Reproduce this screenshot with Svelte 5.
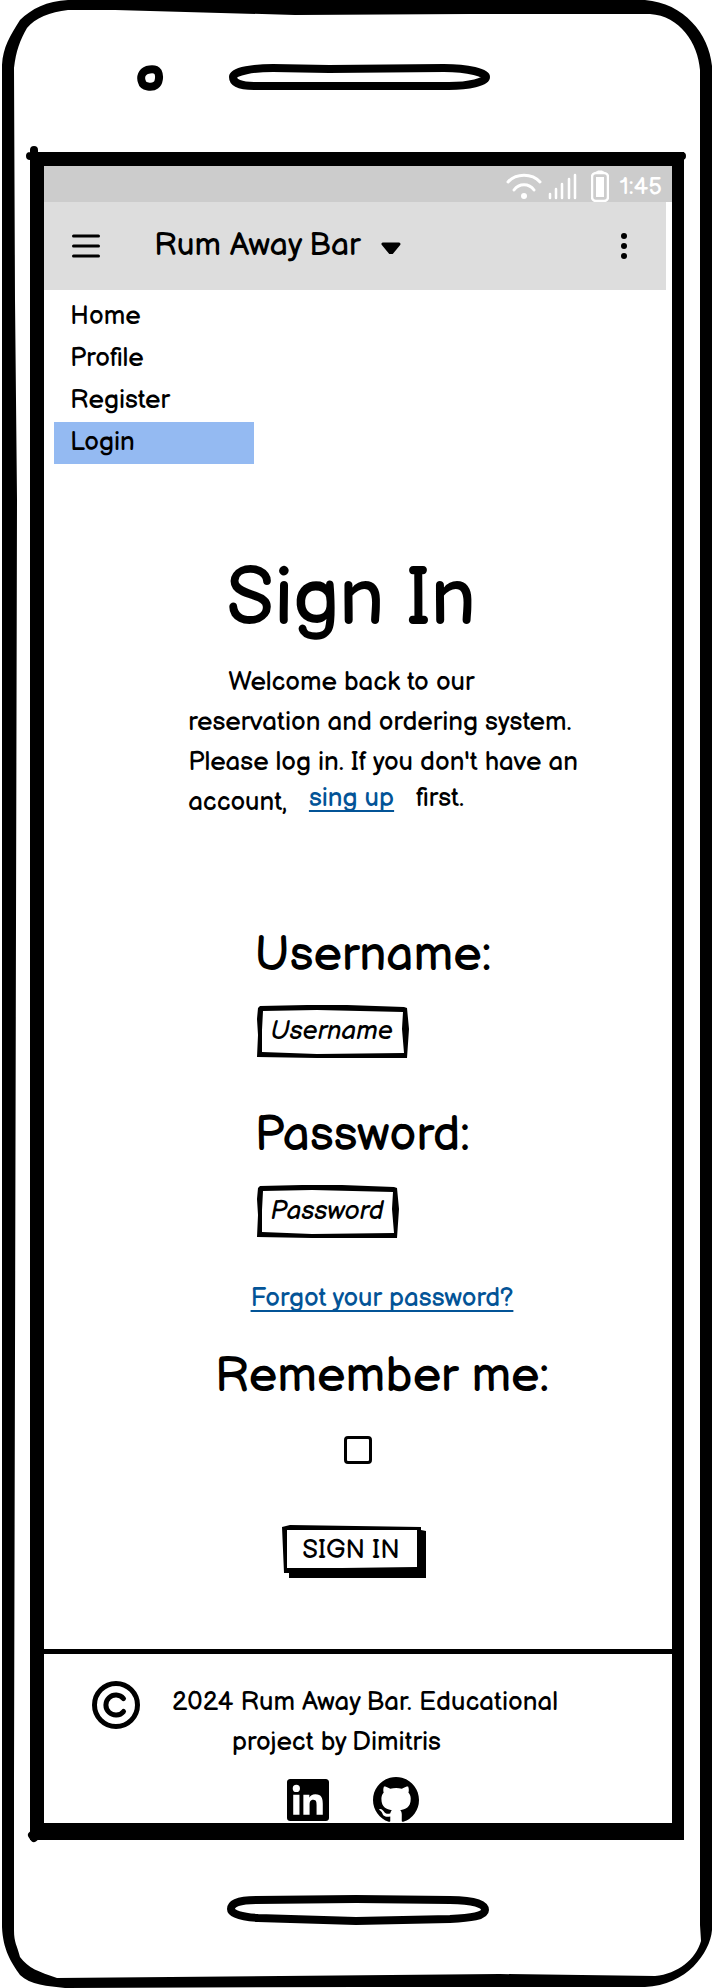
<script>
  const menu = ['Home', 'Profile', 'Register', 'Login'];
  const current = 'Login';
  let username = $state('');
  let password = $state('');
  let remember = $state(false);
</script>

<div class="phone">
  <svg class="frame" viewBox="0 0 712 1988" preserveAspectRatio="none" aria-hidden="true">
    <path
      fill-rule="evenodd"
      d="M68 0H645C684 3 709 34 712 66V1930C710 1953 687 1985 645 1987L357 1987L65 1988C48 1986 30 1985 20 1975C11 1962 3 1950 2 1927V65C3 47 10 36 20 20C31 9 47 1 68 0Z
         M68 10L115 10L295 15L470 14L650 14C680 16 698 43 700 70V1925L701 1941C696 1959 678 1974 655 1976L500 1974L57 1978C39 1972 28 1968 20 1957C17 1945 14 1943 14 1930V1780L17 500L15 300L14 68C16 51 20 40 27 28C35 18 50 12 68 10Z"
    />
    <path d="M34 165V150M34 156H30M680 156H682M32 1835L34 1838" fill="none" stroke="#000" stroke-width="8" stroke-linecap="round" />
  </svg>

  <div class="top">
    <svg width="28" height="28" viewBox="0 0 28 28" aria-hidden="true">
      <path d="M11 7C15 6 20 6 22 9C24 13 23 20 20 22C16 25 7 24 6 19C4 14 6 9 11 7Z" fill="none" stroke="#000" stroke-width="8" />
    </svg>
    <svg width="262" height="28" viewBox="0 0 262 28" aria-hidden="true">
      <path d="M4 14C4 8 26 5 44 5L100 6L215 5C240 5 257 10 257 14C257 19 240 23 220 23H25C12 23 4 20 4 14Z" fill="none" stroke="#000" stroke-width="8" />
    </svg>
  </div>

  <div class="screen">
    <div class="status">
      <svg width="36" height="28" viewBox="0 0 36 28" fill="none" stroke="#fff" stroke-width="3" stroke-linecap="round" aria-hidden="true">
        <path d="M2 10C10 1 26 1 34 10M8 18C13 11 23 11 28 18" />
        <circle cx="18" cy="24" r="3" fill="#fff" stroke="none" />
      </svg>
      <svg class="signal" width="29" height="28" viewBox="0 0 29 28" fill="none" stroke="#fff" stroke-width="2.500" stroke-linecap="round" aria-hidden="true">
        <path d="M2 22V26M8 17V26M14 12V26M21 7V26M27 3V26" />
      </svg>
      <svg class="battery" width="18" height="32" viewBox="0 0 18 32" aria-hidden="true">
        <path d="M4 3L7 1H11L14 3Z" fill="#fff" stroke="#fff" stroke-linejoin="round" />
        <rect x="1" y="3" width="16" height="28" rx="4" fill="none" stroke="#fff" stroke-width="2.500" />
        <rect x="5" y="7" width="8" height="20" fill="#fff" />
      </svg>
      <span class="time">1:45</span>
    </div>

    <header>
      <button class="icon" aria-label="Menu">
        <svg width="28" height="24" viewBox="0 0 28 24" stroke="#000" stroke-width="3" stroke-linecap="round">
          <path d="M1.500 2H26.500M1.500 12H26.500M1.500 22H26.500" />
        </svg>
      </button>
      <button class="title">
        Rum Away Bar
        <svg width="20" height="12" viewBox="0 0 20 12">
          <path d="M2 2H18L11 10.500H9Z" stroke="#000" stroke-width="3" stroke-linejoin="round" />
        </svg>
      </button>
      <button class="icon more" aria-label="More">
        <svg width="6" height="26" viewBox="0 0 6 26">
          <circle cx="3" cy="3" r="3" /><circle cx="3" cy="13" r="3" /><circle cx="3" cy="23" r="3" />
        </svg>
      </button>
    </header>

    <nav>
      {#each menu as item}
        <a href="#{item.toLowerCase()}" class:active={item === current}>{item}</a>
      {/each}
    </nav>

    <main>
      <h1>Sign In</h1>
      <p>
        Welcome back to our<br />
        reservation and ordering system.<br />
        Please log in. If you don't have an<br />
        account,<a class="link raised" href="#signup">sing up</a><span class="raised">first.</span>
      </p>

      <form onsubmit={(e) => e.preventDefault()}>
        <div class="fields">
          <label for="username">Username:</label>
          <div class="box">
            <svg viewBox="0 0 152 53" preserveAspectRatio="none" aria-hidden="true">
              <path fill-rule="evenodd" d="M3 1L50 0L90 0L147 2L150 3L152 24L150 53L100 53L60 53L0 52L1 30L0 14L1 3ZM6 6L60 5L146 7L145 24L147 48L60 49L5 47L5 25Z" />
            </svg>
            <input id="username" placeholder="Username" bind:value={username} />
          </div>
          <label for="password">Password:</label>
          <div class="box short">
            <svg viewBox="0 0 142 53" preserveAspectRatio="none" aria-hidden="true">
              <path fill-rule="evenodd" d="M3 1L45 0L85 0L137 2L140 3L142 24L140 53L95 53L55 53L0 52L1 30L0 14L1 3ZM6 6L55 5L136 7L135 24L137 48L55 49L5 47L5 25Z" />
            </svg>
            <input id="password" type="password" placeholder="Password" bind:value={password} />
          </div>
        </div>
        <a class="link forgot" href="#forgot">Forgot your password?</a>
        <label class="remember" for="remember">Remember me:</label>
        <input id="remember" type="checkbox" bind:checked={remember} />
        <button class="submit">
          <svg viewBox="0 0 144 53" preserveAspectRatio="none" aria-hidden="true">
            <path fill-rule="evenodd" d="M0 2L8 0L139 2V5L144 6V53H7V48H2L1 25ZM5 5L135 5V42L60 43L5 43Z" />
          </svg>
          <span>SIGN IN</span>
        </button>
      </form>
    </main>

    <footer>
      <div class="legal">
        <svg width="48" height="48" viewBox="0 0 48 48" fill="none" stroke="#000" aria-hidden="true">
          <circle cx="24" cy="24" r="21.500" stroke-width="5" />
          <path d="M31.500 17.500A10 10 0 1 0 31.500 30.500" stroke-width="5" stroke-linecap="round" />
        </svg>
        <small>2024 Rum Away Bar. Educational<span>project by Dimitris</span></small>
      </div>
      <div class="social">
        <a href="#linkedin" aria-label="LinkedIn">
          <svg width="42" height="42" viewBox="0 0 24 24">
            <path d="M20.447 20.452h-3.554v-5.569c0-1.328-.027-3.037-1.852-3.037-1.853 0-2.136 1.445-2.136 2.939v5.667H9.351V9h3.414v1.561h.046c.477-.9 1.637-1.850 3.370-1.850 3.601 0 4.267 2.370 4.267 5.455v6.286zM5.337 7.433a2.062 2.062 0 0 1-2.063-2.065 2.064 2.064 0 1 1 2.063 2.065zm1.782 13.019H3.555V9h3.564v11.452zM22.225 0H1.771C.792 0 0 .774 0 1.729v20.542C0 23.227.792 24 1.771 24h20.451C23.200 24 24 23.227 24 22.271V1.729C24 .774 23.200 0 22.222 0h.003z" />
          </svg>
        </a>
        <a href="#github" aria-label="GitHub">
          <svg width="46" height="46" viewBox="0 0 16 16">
            <path d="M8 0C3.580 0 0 3.580 0 8c0 3.540 2.290 6.530 5.470 7.590.4.070.55-.17.55-.38 0-.19-.01-.82-.01-1.490-2.010.37-2.530-.49-2.690-.94-.09-.23-.48-.94-.82-1.130-.28-.15-.68-.52-.01-.53.63-.01 1.080.58 1.230.82.72 1.210 1.870.87 2.330.66.070-.52.28-.87.51-1.070-1.780-.2-3.640-.89-3.640-3.950 0-.87.31-1.590.82-2.150-.08-.2-.36-1.020.08-2.120 0 0 .67-.21 2.200.82.64-.18 1.320-.27 2-.27s1.360.09 2 .27c1.530-1.040 2.200-.82 2.200-.82.44 1.100.16 1.920.08 2.120.51.56.82 1.270.82 2.150 0 3.070-1.870 3.750-3.650 3.950.29.25.54.73.54 1.480 0 1.070-.01 1.930-.01 2.200 0 .21.15.46.55.38A8.013 8.013 0 0 0 16 8c0-4.420-3.580-8-8-8z" />
          </svg>
        </a>
      </div>
    </footer>
  </div>

  <div class="bottom">
    <svg width="264" height="32" viewBox="0 0 264 32" aria-hidden="true">
      <path d="M6 15C6 9 15 6 31 6L131 5L225 6C248 6 260 10 260 16C260 22 246 24 225 25L131 27L33 24C17 23 6 20 6 15Z" fill="none" stroke="#000" stroke-width="8" />
    </svg>
  </div>
</div>

<style>
  :global(body) {
    margin: 0;
    background: #fff;
  }
  .phone {
    position: relative;
    box-sizing: border-box;
    min-height: 100vh;
    padding: 0 28px 0 30px;
    display: flex;
    flex-direction: column;
    font: 26px/40px 'Balsamiq Sans', 'Liberation Sans', Arial, sans-serif;
    color: #000;
  }
  .frame {
    position: absolute;
    inset: 0;
    width: 100%;
    height: 100%;
    pointer-events: none;
  }
  svg {
    display: block;
    flex: none;
  }
  button {
    font: inherit;
    color: inherit;
    background: none;
    border: 0;
    padding: 0;
    cursor: pointer;
  }
  a {
    color: inherit;
    text-decoration: none;
  }
  .top {
    height: 89px;
    padding: 63px 0 0 106px;
    display: flex;
    gap: 65px;
  }
  .screen {
    flex: 1;
    display: flex;
    flex-direction: column;
    border: solid #000;
    border-width: 14px 12px 17px 14px;
  }
  .status {
    height: 36px;
    padding-right: 10px;
    display: flex;
    align-items: center;
    justify-content: flex-end;
    background: #ccc;
    color: #fff;
  }
  .status svg {
    margin-top: 4px;
  }
  .status .signal {
    margin-left: 6px;
  }
  .status .battery {
    margin-left: 14px;
    margin-right: 10px;
  }
  .time {
    padding-top: 6px;
    font-size: 24px;
  }
  header {
    height: 88px;
    margin-right: 6px;
    padding: 0 39px 0 28px;
    display: flex;
    align-items: center;
    background: #ddd;
    box-shadow: 6px 0 #fff;
  }
  .title {
    margin-left: 54px;
    display: flex;
    align-items: center;
    gap: 20px;
    font-size: 32px;
  }
  .title svg {
    margin-top: 4px;
  }
  .more {
    margin-left: auto;
  }
  nav {
    width: 200px;
    margin: 6px 0 0 10px;
  }
  nav a {
    display: block;
    padding: 3px 16px;
    line-height: 36px;
  }
  .active {
    background: #94baf2;
  }
  main,
  form {
    display: flex;
    flex-direction: column;
    align-items: center;
  }
  h1 {
    margin: 88px 14px 0 0;
    font-size: 80px;
    font-weight: 400;
    line-height: 96px;
  }
  p {
    margin: 15px 0 0 50px;
    text-indent: 40px;
    white-space: nowrap;
  }
  .link {
    color: #035497;
    text-decoration: underline 2px;
    text-underline-offset: 4px;
    text-decoration-skip-ink: none;
  }
  .raised {
    display: inline-block;
    margin-left: 22px;
    line-height: 32px;
    text-indent: 0;
    vertical-align: 4px;
  }
  form {
    margin-top: 105px;
  }
  .fields {
    margin-left: 30px;
  }
  label {
    display: block;
    font-size: 48px;
    line-height: 56px;
  }
  .box {
    position: relative;
    width: 152px;
    height: 53px;
    margin: 21px 0 50px 2px;
  }
  .short {
    width: 142px;
    margin-bottom: 41px;
  }
  .box svg,
  .submit svg {
    position: absolute;
    inset: 0;
    width: 100%;
    height: 100%;
    pointer-events: none;
  }
  .box input {
    box-sizing: border-box;
    width: 100%;
    height: 100%;
    padding: 0 10px 0 14px;
    border: 0;
    background: none;
    font: inherit;
    color: inherit;
  }
  .box input::placeholder {
    color: #000;
    opacity: 1;
    font-style: italic;
  }
  .forgot {
    margin-left: 48px;
  }
  .remember {
    margin: 30px 0 0 48px;
  }
  #remember {
    appearance: none;
    box-sizing: border-box;
    width: 28px;
    height: 28px;
    margin: 31px 0 0;
    border: 3px solid #000;
    border-radius: 4px;
  }
  #remember:checked {
    background: #000;
  }
  .submit {
    position: relative;
    width: 144px;
    height: 53px;
    margin: 61px 8px 0 0;
    padding: 0 6px 2px 0;
  }
  footer {
    margin-top: auto;
    padding-top: 29px;
    border-top: 5px solid #000;
  }
  .legal {
    padding-left: 48px;
    display: flex;
    gap: 32px;
  }
  .legal svg {
    margin-top: -2px;
  }
  small {
    font-size: inherit;
  }
  small span {
    display: block;
    padding-left: 60px;
  }
  .social {
    padding: 14px 10px 0 0;
    display: flex;
    align-items: center;
    justify-content: center;
    gap: 44px;
  }
  .bottom {
    height: 148px;
    display: flex;
    align-items: center;
    justify-content: center;
  }
  .bottom svg {
    margin-bottom: 8px;
  }
</style>
